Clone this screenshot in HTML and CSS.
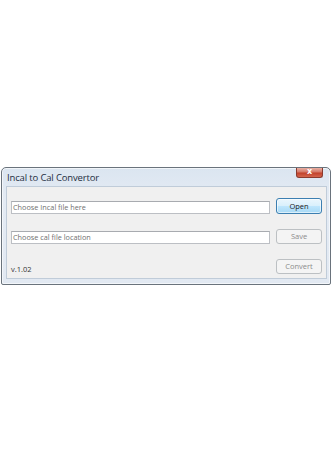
FILE: index.html
```html
<!DOCTYPE html>
<html>
<head>
<meta charset="utf-8">
<link rel="stylesheet" href="styles.css">
</head>
<body>
<div class="window">
  <div class="titlebar">
    <span class="title">Incal to Cal Convertor</span>
    <span class="close">x</span>
  </div>
  <div class="panel">
    <div class="field"><span>Choose Incal file here</span></div>
    <div class="btn btn-primary">Open</div>
    <div class="field"><span>Choose cal file location</span></div>
    <div class="btn btn-disabled">Save</div>
    <div class="version">v.1.02</div>
    <div class="btn btn-disabled">Convert</div>
  </div>
</div>
</body>
</html>
```

FILE: styles.css
```css
html, body {
  margin: 0;
  padding: 0;
  background: #ffffff;
}
body {
  width: 332px;
  height: 455px;
  padding-top: 167px;
  box-sizing: border-box;
  font-family: "Open Sans", "Noto Sans", sans-serif;
}
.window {
  margin-left: 1px;
  width: 330px;
  box-sizing: border-box;
  border: 1px solid #6a737c;
  border-radius: 5px 5px 2px 2px;
  background: linear-gradient(#dbe5f0, #e4ebf4 30px, #e2e9f2);
  padding: 0 3px 5px 4px;
  box-shadow: 0 0 0 1px rgba(255,255,255,0.6) inset;
}
.titlebar {
  height: 18px;
  display: flex;
  justify-content: space-between;
  align-items: flex-start;
}
.title {
  font-size: 9.5px;
  color: #1f2f42;
  margin-top: 4px;
  margin-left: 1px;
  letter-spacing: -0.15px;
  line-height: 11px;
}
.close {
  width: 25px;
  height: 9px;
  margin-right: 4px;
  border: 1px solid #8a3a2e;
  border-top: none;
  border-radius: 0 0 3px 3px;
  background: linear-gradient(#e9b0a4, #d47766 45%, #c2412b 55%, #d4654d);
  color: #ffffff;
  font-size: 8px;
  font-weight: bold;
  line-height: 8px;
  text-align: center;
  font-family: "DejaVu Sans", sans-serif;
}
.panel {
  background: #f0f0f0;
  border: 1px solid #c0ccd9;
  padding: 11px 4px 4px 4px;
  display: grid;
  grid-template-columns: 1fr 46px;
  column-gap: 6px;
  row-gap: 15px;
  align-items: end;
}
.field {
  height: 13px;
  box-sizing: border-box;
  background: #ffffff;
  border: 1px solid #bcbfc4;
  border-top-color: #a8abb0;
  font-size: 7.3px;
  line-height: 11px;
  color: #707070;
  padding-left: 1px;
  white-space: nowrap;
  overflow: hidden;
}
.btn {
  box-sizing: border-box;
  height: 15px;
  border-radius: 3px;
  font-size: 7.5px;
  line-height: 13px;
  text-align: center;
}
.btn-primary {
  height: 16px;
  line-height: 14px;
  border: 1px solid #3c7fb1;
  background: linear-gradient(#eaf6fd, #d9f0fc 48%, #bee6fd 52%, #a7d9f5);
  color: #1a1a1a;
  box-shadow: inset 0 0 0 1px rgba(255,255,255,0.6);
}
.btn-disabled {
  border: 1px solid #bcc0c3;
  background: #f4f4f4;
  color: #8c8c8c;
}
.version {
  font-size: 7.5px;
  color: #333;
  padding-left: 0;
  line-height: 10px;
}
```
